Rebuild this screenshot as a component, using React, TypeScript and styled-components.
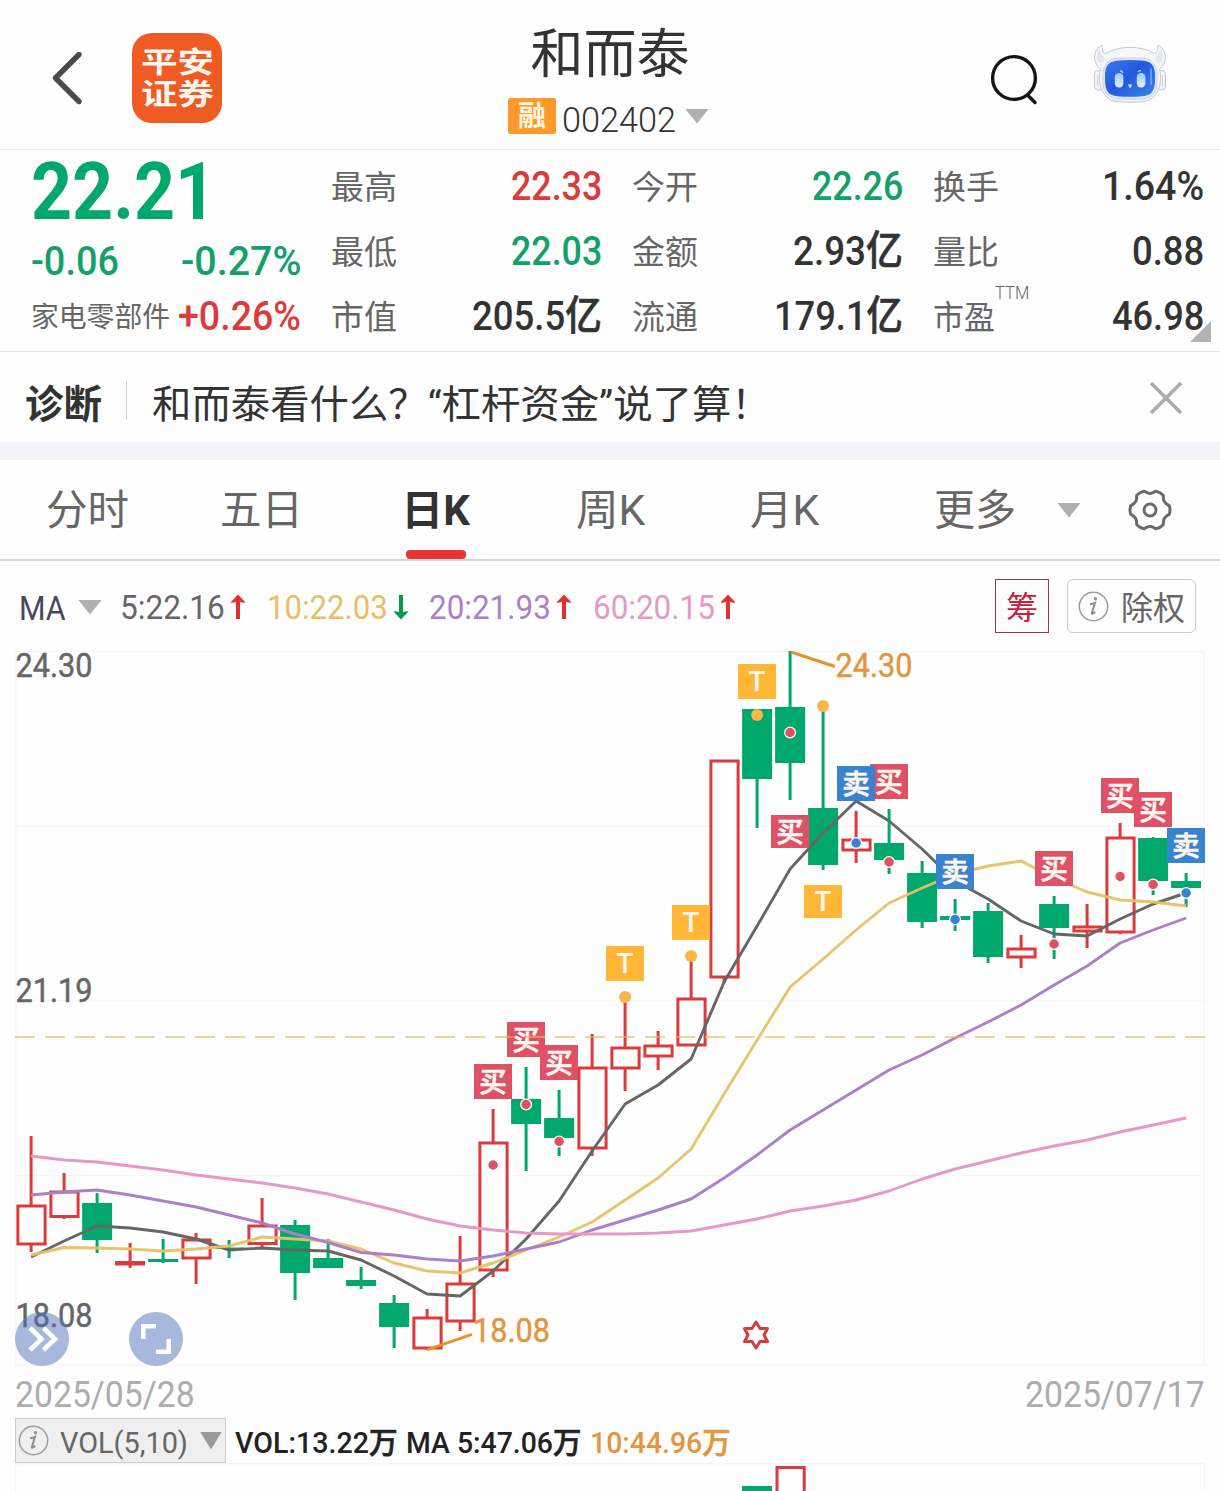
import React, { useLayoutEffect, useRef } from 'react';
import styled, { createGlobalStyle } from 'styled-components';

const GREEN = '#00a96b';
const TEXT_GREEN = '#12a06b';
const RED = '#dc3b3b';
const DARK = '#333333';
const GREY = '#666666';

const Global = createGlobalStyle`
  body { margin: 0; background: #fefefe; }
  * { box-sizing: border-box; }
  svg { display: block; }
  svg text { font-family: Roboto, "Noto Sans CJK SC", sans-serif; }
`;

const Page = styled.div`
  width: 1220px;
  height: 1491px;
  overflow: hidden;
  background: #fefefe;
  font-family: Roboto, "Noto Sans CJK SC", sans-serif;
  color: ${DARK};
  display: flex;
  flex-direction: column;
`;

/* Text condensed or widened to a known advance width. */
const FitBox = styled.span<{ $w: number; $size: number; $weight: number; $color: string; $lh?: number; $dy?: number }>`
  display: block;
  flex: none;
  width: ${p => p.$w}px;
  font-size: ${p => p.$size}px;
  font-weight: ${p => p.$weight};
  line-height: ${p => p.$lh ?? Math.round(p.$size * 1.2)}px;
  margin-top: ${p => p.$dy ?? 0}px;
  color: ${p => p.$color};
  white-space: nowrap;
`;
const FitInner = styled.span`
  display: inline-block;
  transform-origin: 0 50%;
  white-space: pre;
`;
const Unit = styled.span`
  -webkit-text-stroke: 0.7px currentColor;
`;
type FitProps = { children: string; w: number; size: number; weight?: number; color?: string; lh?: number; dy?: number };
function Fit({ children, w, size, weight = 400, color = DARK, lh, dy }: FitProps) {
  const ref = useRef<HTMLSpanElement>(null);
  useLayoutEffect(() => {
    const el = ref.current;
    if (el) el.style.transform = `scaleX(${w / el.offsetWidth})`;
  }, [w, children]);
  const unit = /[亿万]$/.test(children);
  return (
    <FitBox $w={w} $size={size} $weight={weight} $color={color} $lh={lh} $dy={dy}>
      <FitInner ref={ref}>
        {unit ? children.slice(0, -1) : children}
        {unit && <Unit>{children.slice(-1)}</Unit>}
      </FitInner>
    </FitBox>
  );
}

const Triangle = styled.i<{ $w: number; $h: number; $color?: string }>`
  flex: none;
  width: ${p => p.$w}px;
  height: ${p => p.$h}px;
  background: ${p => p.$color ?? '#b0b0b0'};
  clip-path: polygon(0 0, 100% 0, 50% 100%);
`;

/* ---------- header ---------- */
const Header = styled.header`
  flex: none;
  height: 150px;
  border-bottom: 1px solid #ebebeb;
  display: grid;
  grid-template-columns: 360px 500px 360px;
`;
const HeaderLeft = styled.div`
  display: flex;
  align-items: center;
  padding: 6px 0 0 50px;
  gap: 46px;
`;
const Brand = styled.div`
  width: 90px;
  height: 90px;
  border-radius: 20px;
  background: #f05a23;
  padding: 14px 0 0 9px;
`;
const HeaderMid = styled.div`
  display: flex;
  flex-direction: column;
  align-items: center;
`;
const Title = styled.h1`
  margin: 20px 0 0 0;
  height: 70px;
  font-size: 53px;
  line-height: 70px;
  font-weight: 400;
`;
const CodeRow = styled.div`
  display: flex;
  align-items: center;
  height: 36px;
  margin: 8px 0 0 -3px;
`;
const MarginTag = styled.span`
  width: 48px;
  height: 36px;
  margin-right: 6px;
  background: #fe9a2b;
  color: #fff8e0;
  border-radius: 2px;
  font-size: 28px;
  font-weight: 700;
  line-height: 38px;
  text-align: center;
`;
const HeaderRight = styled.div`
  display: flex;
  align-items: center;
  padding: 0 0 0 128px;
  gap: 52px;
`;
const SearchSlot = styled.div`
  padding-top: 8px;
`;

/* ---------- quote ---------- */
const Quote = styled.section`
  flex: none;
  height: 202px;
  border-bottom: 1px solid #e8e8e8;
  display: grid;
  grid-template-columns: 270px 271px 271px 271px;
  column-gap: 30px;
  padding-left: 31px;
  position: relative;
`;
const PriceCol = styled.div`
  display: flex;
  flex-direction: column;
  padding-top: 2px;
`;
const Between = styled.div<{ $h: number }>`
  display: flex;
  justify-content: space-between;
  align-items: center;
  height: ${p => p.$h}px;
`;
const StatCol = styled.div`
  padding-top: 4px;
  display: flex;
  flex-direction: column;
`;
const StatLabel = styled.span`
  display: flex;
  align-items: center;
  color: ${GREY};
`;
const Sup = styled.sup`
  align-self: flex-start;
  margin-top: -14px;
`;
const Corner = styled.i`
  position: absolute;
  right: 9px;
  bottom: 9px;
  width: 21px;
  height: 21px;
  background: #b3b3b3;
  clip-path: polygon(100% 0, 100% 100%, 0 100%);
`;

/* ---------- diagnosis ---------- */
const Diagnosis = styled.section`
  flex: none;
  height: 90px;
  display: flex;
  align-items: center;
  padding: 12px 37px 0 25px;
`;
const Separator = styled.i`
  width: 1px;
  height: 39px;
  margin: 0 25px 5px 24px;
  background: #cfcfcf;
`;
const CloseSlot = styled.div`
  margin: 0 0 10px auto;
`;
const Band = styled.div`
  flex: none;
  height: 18px;
  background: #f3f4f9;
`;

/* ---------- tabs ---------- */
const Tabs = styled.nav`
  flex: none;
  height: 101px;
  border-bottom: 2px solid #d4d4d4;
  display: flex;
`;
const Tab = styled.div<{ $on?: boolean }>`
  width: 174.3px;
  height: 99px;
  display: flex;
  flex-direction: column;
  align-items: center;
  justify-content: space-between;
  padding-top: 25px;
  &::after {
    content: '';
    width: 60px;
    height: 9px;
    border-radius: 4px;
    background: ${p => (p.$on ? '#e73434' : 'transparent')};
  }
`;
const More = styled.div`
  display: flex;
  align-items: center;
  height: 99px;
  padding: 1px 0 0 62.5px;
  gap: 41px;
`;
const GearSlot = styled.div`
  display: flex;
  align-items: center;
  height: 99px;
  padding-left: 45px;
`;

/* ---------- moving average row ---------- */
const MaRow = styled.section`
  flex: none;
  height: 79px;
  padding: 18px 24px 0 19px;
  display: flex;
  align-items: flex-start;
`;
const MaList = styled.div`
  display: flex;
  align-items: center;
  height: 56px;
`;
const MaItem = styled.div<{ $ml: number }>`
  display: flex;
  align-items: center;
  gap: 5px;
  margin-left: ${p => p.$ml}px;
`;
const Chips = styled.div`
  width: 54px;
  height: 54px;
  margin-left: auto;
  border: 1.5px solid #a2334d;
  color: #c5223f;
  font-size: 32px;
  line-height: 56px;
  text-align: center;
`;
const Rights = styled.div`
  width: 129px;
  height: 54px;
  margin-left: 18px;
  border: 1px solid #cbcbcb;
  border-radius: 6px;
  display: flex;
  align-items: center;
  gap: 12px;
  padding-left: 10px;
`;

/* ---------- chart ---------- */
const ChartArea = styled.section`
  flex: none;
  position: relative;
  height: 730px;
`;
const RoundButton = styled.button<{ $x: number }>`
  position: absolute;
  left: ${p => p.$x}px;
  top: 672px;
  width: 54px;
  height: 54px;
  padding: 0;
  border: 0;
  border-radius: 50%;
  background: rgba(82, 112, 186, 0.5);
`;
const Dates = styled.div`
  flex: none;
  height: 48px;
  padding: 1px 15px 0;
  display: flex;
  justify-content: space-between;
`;
const VolRow = styled.section`
  flex: none;
  height: 45px;
  padding-left: 15px;
  display: flex;
  align-items: center;
`;
const VolPicker = styled.div`
  width: 211px;
  height: 45px;
  margin-right: 9px;
  background: #efefef;
  border: 1px solid #cccccc;
  display: flex;
  align-items: center;
  padding-left: 2px;
`;
const Spacer = styled.i<{ $w: number }>`
  flex: none;
  width: ${p => p.$w}px;
`;
const VolChart = styled.section`
  flex: none;
  height: 28px;
`;

/* ---------- icons ---------- */
const BackIcon = () => (
  <svg width="36" height="60" viewBox="0 0 36 60" fill="none" stroke="#4b4b4b" strokeWidth="5.4" strokeLinecap="round" strokeLinejoin="round">
    <path d="M29 6.5 5.5 30 29 53.5" />
  </svg>
);
const SearchIcon = () => (
  <svg width="52" height="54" viewBox="988 52 52 54" fill="none" stroke="#151515" strokeWidth="3.4" strokeLinecap="round">
    <circle cx="1014" cy="78" r="21.4" />
    <path d="M1028 95.5 1035 102.5" />
  </svg>
);
const RobotIcon = () => (
  <svg width="76" height="64" viewBox="1092 43 76 64">
    <defs>
      <linearGradient id="face" x1="0" y1="0" x2="1" y2="1">
        <stop offset="0" stopColor="#3f7df0" />
        <stop offset=".45" stopColor="#2457dc" />
        <stop offset="1" stopColor="#3b86ee" />
      </linearGradient>
      <linearGradient id="eye" x1="0" y1="0" x2="0" y2="1">
        <stop offset="0" stopColor="#9cc8ff" />
        <stop offset="1" stopColor="#e0f0ff" />
      </linearGradient>
      <linearGradient id="shell" x1="0" y1="0" x2="0" y2="1">
        <stop offset="0" stopColor="#f7f7f9" />
        <stop offset="1" stopColor="#f1f3f8" />
      </linearGradient>
    </defs>
    <g fill="url(#shell)" stroke="#c6c7cc" strokeWidth="1">
      <rect x="1094.500" y="70.500" width="10" height="19.500" rx="4" />
      <rect x="1155.500" y="70.500" width="10" height="19.500" rx="4" />
      <path d="M1101.500 45.500c-6.500 3-8.500 12-5.500 18 1 2.500 3 3 4.500 6-1.500 4-1.500 14 .5 18.500 3 8 8 12.500 15 13.500q14 1.500 28 0c7-1 12-5.500 15-13.500 2-4.500 2-14.500.5-18.500 1.500-3 3.500-3.500 4.500-6 3-6 1-15-5.500-18-1.500 1-.5 3-1.500 6-.5 2-2 2.500-4 1.500-11-7.500-35-7.500-46 0-2 1-3.500.5-4-1.500-1-3 0-5-1.500-6Z" />
    </g>
    <path d="M1099.500 49c-3 4-3 10-1 13 2 2 4 2 6-2 1-2-1-3-2-5s-2-3-3-6ZM1160.500 49c3 4 3 10 1 13-2 2-4 2-6-2-1-2 1-3 2-5s2-3 3-6Z" fill="#e3e6ec" />
    <path d="M1097.500 75v11M1162.500 75v11" stroke="#eccfcf" strokeWidth="1.200" />
    <rect x="1103" y="58" width="54" height="41" rx="15" fill="#dfeafc" stroke="#bccbe6" strokeWidth=".8" />
    <path d="M1118 60.500q12-1 24 0c9 .8 12.500 5 13 13v8c-.5 10-4 14-12.500 14.700q-12.500 1-25 0c-8.500-.7-12-4.700-12.500-14.700v-8c.5-8 4-12.200 13-13Z" fill="url(#face)" />
    <path d="M1151 69v15" stroke="#5f98f8" strokeWidth="2" strokeLinecap="round" />
    <rect x="1114.800" y="73" width="8.600" height="14.500" rx="4.200" fill="url(#eye)" />
    <rect x="1136.800" y="73" width="8.600" height="14.500" rx="4.200" fill="url(#eye)" />
    <path d="M1120 70.800q2 0 3 2M1138 72q1-1.800 3-1.200" fill="none" stroke="#bcd8ff" strokeWidth="1.300" />
    <path d="M1127.800 84.500h4.500l-2.200 4Z" fill="#cfe4ff" />
  </svg>
);
const CloseIcon = () => (
  <svg width="34" height="34" viewBox="0 0 34 34" stroke="#adadad" strokeWidth="3.6">
    <path d="M2 2 32 32M32 2 2 32" />
  </svg>
);
/* Six blunt teeth joined by rounded valleys. */
const gearPath = (() => {
  const at = (r: number, deg: number) => {
    const a = (deg * Math.PI) / 180;
    return `${(24 + r * Math.cos(a)).toFixed(2)} ${(24 + r * Math.sin(a)).toFixed(2)}`;
  };
  let d = `M${at(19.8, -12)}`;
  for (let k = 0; k < 6; k++) {
    const m = 60 * k;
    d += `Q${at(20.6, m)} ${at(19.8, m + 12)}C${at(17.6, m + 19)} ${at(16.6, m + 24)} ${at(16.6, m + 30)}C${at(16.6, m + 36)} ${at(17.6, m + 41)} ${at(19.8, m + 48)}`;
  }
  return `${d}Z`;
})();
const GearIcon = () => (
  <svg width="48" height="48" viewBox="0 0 48 48" fill="none" stroke="#6b6b6b" strokeWidth="3" strokeLinejoin="round">
    <path d={gearPath} />
    <circle cx="24" cy="24" r="6" />
  </svg>
);
const InfoIcon = () => (
  <svg width="31" height="31" viewBox="0 0 31 31">
    <circle cx="15.5" cy="15.5" r="14.2" fill="none" stroke="#9d9d9d" strokeWidth="1.5" />
    <circle cx="17.4" cy="7.800" r="1.700" fill="#8f8f8f" />
    <path d="M12 13.200q2.800-.3 5-1.300l-3 9.600q-.4 1.700.8 1.200 1-.5 2.300-2" fill="none" stroke="#8f8f8f" strokeWidth="2" />
  </svg>
);
const Arrow = ({ up }: { up?: boolean }) => (
  <svg width="16" height="26" viewBox="0 0 16 26" fill={up ? '#dd3232' : '#079a4c'}>
    <path transform={up ? undefined : 'rotate(180 8 13)'} d="M8 0.500 15.500 8.500Q13 9 10 7.800V25H6V7.800Q3 9 .5 8.500Z" />
  </svg>
);

/* ---------- chart data: [kind, high, bodyTop, bodyBottom, low] ---------- */
type Candle = ['r' | 'g', number, number, number, number];
const candles: Candle[] = [
  ['r', 1136, 1204.5, 1245.5, 1252], ['r', 1173, 1190.5, 1218, 1219], ['g', 1193, 1203, 1240, 1253],
  ['r', 1243, 1261, 1265.5, 1268], ['g', 1239, 1259, 1262, 1263], ['r', 1233, 1238.5, 1259.5, 1284],
  ['g', 1240, 1247.5, 1249, 1258], ['r', 1198, 1224.5, 1245, 1248], ['g', 1220, 1225, 1273, 1300],
  ['g', 1239, 1258, 1268, 1268], ['g', 1267, 1280, 1286, 1289], ['g', 1295, 1303, 1327, 1348],
  ['r', 1309, 1316.5, 1349.5, 1350], ['r', 1236, 1282.5, 1322.5, 1331], ['r', 1109, 1141.5, 1271.5, 1277],
  ['g', 1067, 1099, 1124, 1171], ['g', 1090, 1118, 1138, 1156], ['r', 1034, 1066.5, 1149.5, 1156],
  ['r', 997, 1046.5, 1069.5, 1091], ['r', 1031, 1044.5, 1057.5, 1070], ['r', 956, 997.5, 1046.5, 1046],
  ['r', 760, 759.5, 978.5, 983], ['g', 709, 709, 779, 828], ['g', 651, 707, 763, 800],
  ['g', 706, 808, 865, 870], ['r', 811, 838.5, 851.5, 863], ['g', 809, 843, 860, 874],
  ['g', 861, 873, 922, 928], ['g', 899, 916, 920, 931], ['g', 903, 911, 957, 963],
  ['r', 935, 947.5, 958.5, 968], ['g', 896, 904, 928, 959], ['r', 904, 925.5, 932.5, 948],
  ['r', 823, 836.5, 933.5, 934], ['g', 837, 838, 881, 895], ['g', 873, 881, 888, 907],
];
const cx = (i: number) => 31.1 + i * 33;
const ma5 = [1257, 1241, 1226, 1228, 1232, 1239, 1250, 1248, 1250, 1251, 1260, 1276, 1294, 1296, 1271, 1239, 1201, 1151, 1104, 1085, 1059, 982, 926, 869, 833, 801, 821, 849, 881, 899, 921, 934, 936, 919, 904, 893];
const ma10 = [1255, 1247.5, 1248, 1249, 1251, 1249, 1246, 1237, 1239, 1241, 1249, 1263, 1271, 1273, 1263, 1250, 1237, 1222, 1200, 1178, 1149, 1094, 1040, 987, 959, 930, 903, 888, 874, 866, 861, 878, 892, 900, 902, 906];
const ma20 = [1195, 1192, 1190, 1195, 1201, 1207, 1215, 1223, 1234, 1242.5, 1252.5, 1255, 1259, 1261, 1256, 1249, 1242, 1230, 1220, 1210, 1199, 1178, 1155, 1130, 1110, 1090, 1070, 1055, 1038, 1022, 1005, 985, 966, 943, 930, 918];
const ma60 = [1156, 1160, 1162, 1166, 1170, 1175, 1179, 1183, 1188, 1194, 1202, 1210, 1219, 1226, 1230, 1233, 1234, 1234, 1234, 1233, 1231, 1225, 1219, 1211, 1206, 1200, 1191, 1179, 1169, 1161, 1153, 1146, 1140, 1132, 1125, 1118];
const line = (v: number[]) => v.map((y, i) => `${cx(i)},${y}`).join(' ');

const PINK = '#df5266';
const BLUE = '#3883d0';
const AMBER = '#ffb735';
const dots: [number, number, string][] = [
  [14, 1165, PINK], [15, 1104.5, PINK], [16, 1141.5, PINK], [18, 997, AMBER], [20, 956, AMBER], [22, 715, AMBER],
  [23, 732.5, PINK], [24, 706, AMBER], [25, 843, BLUE], [26, 862, PINK], [28, 919.5, BLUE], [31, 944, PINK],
  [33, 876.5, PINK], [34, 884.5, PINK], [35, 893, BLUE],
];
const badges: [number, number, number, '买' | '卖' | 'T'][] = [
  [14, 1064, 35, '买'], [15, 1022, 35, '买'], [16, 1045, 35, '买'], [18, 946, 35, 'T'], [20, 905, 35, 'T'],
  [22, 664, 35, 'T'], [23, 815, 33, '买'], [24, 885, 33, 'T'], [26, 764, 35, '买'], [25, 766, 35, '卖'],
  [28, 854, 35, '卖'], [31, 851, 35, '买'], [33, 778, 35, '买'], [34, 792, 35, '买'], [35, 828, 35, '卖'],
];
const badgeFill = { 买: PINK, 卖: BLUE, T: AMBER };

function CandleMark({ c, x }: { c: Candle; x: number }) {
  const [kind, high, top, bottom, low] = c;
  const color = kind === 'r' ? RED : GREEN;
  return (
    <g stroke={color} strokeWidth="3">
      {high < top && <path d={`M${x} ${high}V${top + 1}`} />}
      {low > bottom && <path d={`M${x} ${bottom - 1}V${low}`} />}
      {kind === 'r' && bottom - top > 5 ? (
        <rect x={x - 13.2} y={top + 1.5} width="27.200" height={bottom - top - 3} fill="#fefefe" />
      ) : (
        <rect x={x - 15} y={top} width="30" height={bottom - top} fill={color} stroke="none" />
      )}
    </g>
  );
}

function CandleChart() {
  return (
    <svg width="1220" height="730" viewBox="0 640 1220 730">
      <g stroke="#f7f7f7" strokeWidth="1.500">
        {[651.5, 826, 1000.5, 1175.8, 1365.3].map(y => <path key={y} d={`M15 ${y}H1205`} />)}
        <path d="M15.700 651V1366M1204.300 651V1366" />
      </g>
      {candles.map((c, i) => <CandleMark key={i} c={c} x={cx(i)} />)}
      <g fill="none" strokeWidth="2.900" strokeLinejoin="round">
        <polyline points={line(ma5)} stroke="#666666" />
        <polyline points={line(ma10)} stroke="#e9c065" strokeOpacity=".95" />
        <polyline points={line(ma20)} stroke="#ad7fcb" />
        <polyline points={line(ma60)} stroke="#e898c4" />
      </g>
      {badges.map(([i, y, h, t]) => (
        <g key={i}>
          <rect x={cx(i) - 19.100} y={y} width="38" height={h} fill={badgeFill[t]} />
          <text
            x={cx(i) - 0.200}
            y={t === 'T' ? y + h / 2 + 9 : y + h / 2 + 10}
            fontSize="27.500"
            fontWeight="500"
            fill="#fff6f2"
            stroke="#fff6f2"
            strokeWidth={t === 'T' ? 0.1 : 0.7}
            textAnchor="middle"
          >
            {t}
          </text>
        </g>
      ))}
      <path d="M15 1037H1205" stroke="#efb254" strokeOpacity=".6" strokeWidth="1.800" strokeDasharray="20 10" />
      {dots.map(([i, y, c]) => (
        <circle key={i} cx={cx(i)} cy={y} r={c === AMBER ? 6 : 5.400} fill={c === AMBER ? '#f9b545' : c} stroke={c === AMBER ? 'none' : '#fff'} strokeWidth="1.300" />
      ))}
      <g stroke="#e8922e" strokeWidth="3">
        <path d="M791 652 835 666.500M427 1349.800 472 1334.300" />
      </g>
      <g fontSize="33.500" strokeWidth=".5">
        <g fill={GREY} stroke={GREY}>
          <text x="15.500" y="676.800" textLength="77" lengthAdjust="spacingAndGlyphs">24.30</text>
          <text x="15.500" y="1001.800" textLength="77" lengthAdjust="spacingAndGlyphs">21.19</text>
          <text x="15.500" y="1326.800" textLength="77" lengthAdjust="spacingAndGlyphs">18.08</text>
        </g>
        <g fill="#e3953f" stroke="#e3953f">
          <text x="835.500" y="677" textLength="77" lengthAdjust="spacingAndGlyphs">24.30</text>
          <text x="473" y="1342" textLength="77" lengthAdjust="spacingAndGlyphs">18.08</text>
        </g>
      </g>
      <path d="M756 1322 760 1328.500H767.500L764 1335 767.500 1341.500H760L756 1348 752 1341.500H744.500L748 1335 744.500 1328.500H752Z" fill="none" stroke="#d83b3b" strokeWidth="3" strokeLinejoin="round" />
    </svg>
  );
}

const stats: { label: string; value: string; w: number; color: string; sup?: string }[][] = [
  [
    { label: '最高', value: '22.33', w: 91, color: RED },
    { label: '最低', value: '22.03', w: 91, color: TEXT_GREEN },
    { label: '市值', value: '205.5亿', w: 130, color: DARK },
  ],
  [
    { label: '今开', value: '22.26', w: 91, color: TEXT_GREEN },
    { label: '金额', value: '2.93亿', w: 110, color: DARK },
    { label: '流通', value: '179.1亿', w: 129, color: DARK },
  ],
  [
    { label: '换手', value: '1.64%', w: 102, color: DARK },
    { label: '量比', value: '0.88', w: 72, color: DARK },
    { label: '市盈', value: '46.98', w: 92, color: DARK, sup: 'TTM' },
  ],
];

const tabs: { text: string; w: number; on?: boolean }[] = [
  { text: '分时', w: 83 }, { text: '五日', w: 83 }, { text: '日K', w: 69, on: true }, { text: '周K', w: 69 }, { text: '月K', w: 69 },
];
const averages = [
  { text: '5:22.16', w: 105, color: '#666666', up: true, ml: 18 },
  { text: '10:22.03', w: 121, color: '#e7bf66', up: false, ml: 21 },
  { text: '20:21.93', w: 122, color: '#ab80cb', up: true, ml: 20 },
  { text: '60:20.15', w: 122, color: '#e59ac6', up: true, ml: 21 },
];

export default function App() {
  return (
    <Page>
      <Global />
      <Header>
        <HeaderLeft>
          <BackIcon />
          <Brand>
            <Fit w={73} size={29} weight={700} color="#fff6f0" lh={32}>平安</Fit>
            <Fit w={73} size={29} weight={700} color="#fff6f0" lh={32}>证券</Fit>
          </Brand>
        </HeaderLeft>
        <HeaderMid>
          <Title>和而泰</Title>
          <CodeRow>
            <MarginTag>融</MarginTag>
            <Fit w={114} size={35.5} weight={300} lh={42} dy={7}>002402</Fit>
            <Spacer $w={9} />
            <Triangle $w={24} $h={15} />
          </CodeRow>
        </HeaderMid>
        <HeaderRight>
          <SearchSlot><SearchIcon /></SearchSlot>
          <RobotIcon />
        </HeaderRight>
      </Header>

      <Quote>
        <PriceCol>
          <Fit w={185} size={79} weight={700} color={GREEN} lh={80}>22.21</Fit>
          <Between $h={59}>
            <Fit w={88} size={40} weight={500} color={TEXT_GREEN}>-0.06</Fit>
            <Fit w={120} size={40} weight={500} color={TEXT_GREEN}>-0.27%</Fit>
          </Between>
          <Between $h={51}>
            <Fit w={139} size={28} color={GREY} dy={2}>家电零部件</Fit>
            <Fit w={123} size={40} weight={500} color={RED}>+0.26%</Fit>
          </Between>
        </PriceCol>
        {stats.map((col, i) => (
          <StatCol key={i}>
            {col.map(s => (
              <Between key={s.label} $h={65}>
                <StatLabel>
                  <Fit w={s.sup ? 62 : 66} size={33} color={GREY} dy={2}>{s.label}</Fit>
                  {s.sup && <Sup><Fit w={34} size={18.5} weight={300} color={GREY}>{s.sup}</Fit></Sup>}
                </StatLabel>
                <Fit w={s.w} size={40.5} weight={500} color={s.color}>{s.value}</Fit>
              </Between>
            ))}
          </StatCol>
        ))}
        <Corner />
      </Quote>

      <Diagnosis>
        <Fit w={77} size={39} weight={700} dy={4}>诊断</Fit>
        <Separator />
        <Fit w={619} size={39} dy={4}>和而泰看什么？“杠杆资金”说了算！</Fit>
        <CloseSlot><CloseIcon /></CloseSlot>
      </Diagnosis>
      <Band />

      <Tabs>
        {tabs.map(t => (
          <Tab key={t.text} $on={t.on}>
            <Fit w={t.w} size={42} weight={t.on ? 700 : 400} color={t.on ? DARK : GREY} lh={52}>{t.text}</Fit>
          </Tab>
        ))}
        <More>
          <Fit w={82} size={42} color={GREY} lh={52} dy={1}>更多</Fit>
          <Triangle $w={24} $h={15} />
        </More>
        <GearSlot><GearIcon /></GearSlot>
      </Tabs>

      <MaRow>
        <MaList>
          <Fit w={47} size={33} color="#4b465f" lh={40} dy={3}>MA</Fit>
          <Spacer $w={12} />
          <Triangle $w={24} $h={15} />
          {averages.map(a => (
            <MaItem key={a.text} $ml={a.ml}>
              <Fit w={a.w} size={34} weight={450} color={a.color} lh={40}>{a.text}</Fit>
              <Arrow up={a.up} />
            </MaItem>
          ))}
        </MaList>
        <Chips>筹</Chips>
        <Rights>
          <InfoIcon />
          <Fit w={64} size={33} color={GREY} lh={40} dy={5}>除权</Fit>
        </Rights>
      </MaRow>

      <ChartArea>
        <CandleChart />
        <RoundButton $x={15} aria-label="forward">
          <svg width="54" height="54" fill="none" stroke="#fff" strokeWidth="4.600">
            <path d="M15 16 26.500 27 15 38M28.500 16 40 27 28.500 38" />
          </svg>
        </RoundButton>
        <RoundButton $x={129} aria-label="fullscreen">
          <svg width="54" height="54" fill="none" stroke="#fff" strokeWidth="4.600">
            <path d="M14.300 27V14.300H27M39.700 27V39.700H27" />
          </svg>
        </RoundButton>
      </ChartArea>
      <Dates>
        <Fit w={180} size={36} weight={450} color="#adadad" lh={48}>2025/05/28</Fit>
        <Fit w={180} size={36} weight={450} color="#adadad" lh={48}>2025/07/17</Fit>
      </Dates>
      <VolRow>
        <VolPicker>
          <InfoIcon />
          <Spacer $w={11} />
          <Fit w={128} size={30} color="#666666" dy={4}>VOL(5,10)</Fit>
          <Spacer $w={12} />
          <Triangle $w={22} $h={18} $color="#999999" />
        </VolPicker>
        <Fit w={163} size={30} weight={500} color="#222222" dy={4}>VOL:13.22万</Fit>
        <Spacer $w={8} />
        <Fit w={175} size={30} weight={500} color="#222222" dy={4}>MA 5:47.06万</Fit>
        <Spacer $w={9} />
        <Fit w={141} size={30} weight={500} color="#e3953f" dy={4}>10:44.96万</Fit>
      </VolRow>
      <VolChart>
        <svg width="1220" height="28" viewBox="0 1463 1220 28">
          <path d="M15.500 1491V1463.700H1204.500V1491" fill="none" stroke="#f5f5f5" strokeWidth="1.500" />
          <rect x="742" y="1486" width="30" height="10" fill={GREEN} />
          <rect x="777" y="1467.500" width="27.200" height="40" fill="none" stroke={RED} strokeWidth="3" />
        </svg>
      </VolChart>
    </Page>
  );
}
